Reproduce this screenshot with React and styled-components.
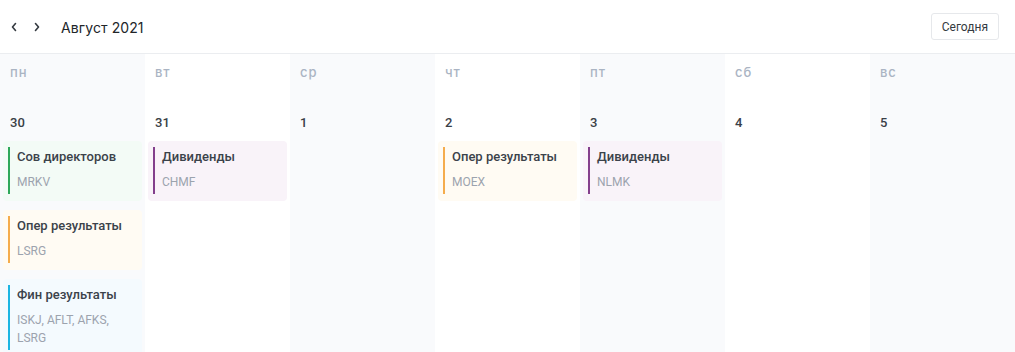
import React from 'react';
import styled, { createGlobalStyle } from 'styled-components';

const GlobalStyle = createGlobalStyle`
  html, body { margin: 0; padding: 0; background: #ffffff; }
  body { font-family: 'Roboto', 'Liberation Sans', sans-serif; color: #343a40; }
`;

const Page = styled.div` display: flex; flex-direction: column; min-height: 100vh; `;
const Header = styled.div` display: flex; align-items: center; justify-content: space-between; height: 53px; padding: 0 16px 0 6px; border-bottom: 1px solid #ebedf0; box-sizing: content-box; `;
const NavGroup = styled.div` display: flex; align-items: center; `;
const NavButton = styled.button` display: flex; align-items: center; justify-content: center; width: 16px; height: 24px; padding: 0; margin-right: 7px; border: none; background: none; color: #343a40; cursor: pointer; `;
const MonthTitle = styled.h2` margin: 2px 0 0 9px; font-family: 'Inter', 'Open Sans', sans-serif; font-size: 14px; font-weight: 400; letter-spacing: 0.1px; color: #212529; `;
const TodayButton = styled.button` height: 27px; padding: 0 10px; border: 1px solid #e6e8eb; border-radius: 3px; background: #fff; font-family: 'Roboto', sans-serif; font-size: 12px; color: #343a40; cursor: pointer; `;

const Grid = styled.div` flex: 1; display: grid; grid-template-columns: repeat(7, 1fr); `;
const Column = styled.div` background: ${p => (p.$tinted ? '#f9fafc' : '#ffffff')}; padding: 0 3px; `;
const DayName = styled.div` height: 39px; padding: 11px 7px 0; line-height: 14px; font-family: 'Inter', sans-serif; font-size: 13px; font-weight: 500; letter-spacing: 0.9px; color: #aab4c3; `;
const DateNum = styled.div` padding: 11px 7px 10px; line-height: 16px; font-size: 13px; font-weight: 500; color: #3a4047; `;

const Card = styled.div` position: relative; margin-bottom: 9px; padding: 8px 8px 10px 14px; border-radius: 4px; background: ${p => p.$bg};
  &::before { content: ''; position: absolute; left: 5px; top: 6px; bottom: 7px; width: 2px; background: ${p => p.$accent}; }
`;
const CardTitle = styled.div` line-height: 16px; font-size: 13px; font-weight: 500; color: #3b424a; `;
const Tickers = styled.div` margin-top: 8px; line-height: 18px; font-size: 12px; color: #9ca3ae; `;

const kinds = {
  board: { bg: '#f3fbf6', accent: '#2fa85a' },
  oper: { bg: '#fffbf3', accent: '#f5ac4c' },
  fin: { bg: '#f4fafe', accent: '#1cb5e2' },
  div: { bg: '#f9f3f9', accent: '#833f8c' },
};

const days = [
  { name: 'пн', date: 30, events: [
    { kind: 'board', title: 'Сов директоров', tickers: 'MRKV' },
    { kind: 'oper', title: 'Опер результаты', tickers: 'LSRG' },
    { kind: 'fin', title: 'Фин результаты', tickers: 'ISKJ, AFLT, AFKS, LSRG' },
  ] },
  { name: 'вт', date: 31, events: [{ kind: 'div', title: 'Дивиденды', tickers: 'CHMF' }] },
  { name: 'ср', date: 1, events: [] },
  { name: 'чт', date: 2, events: [{ kind: 'oper', title: 'Опер результаты', tickers: 'MOEX' }] },
  { name: 'пт', date: 3, events: [{ kind: 'div', title: 'Дивиденды', tickers: 'NLMK' }] },
  { name: 'сб', date: 4, events: [] },
  { name: 'вс', date: 5, events: [] },
];

const Chevron = ({ dir }) => (
  <svg width="8" height="10" viewBox="0 0 8 10" fill="none">
    <path d={dir === 'left' ? 'M5.5 1.5 L2.5 5 L5.5 8.5' : 'M2.5 1.5 L5.5 5 L2.5 8.5'} stroke="currentColor" strokeWidth="1.6" strokeLinecap="round" strokeLinejoin="round" />
  </svg>
);

export default function App() {
  return (
    <Page>
      <GlobalStyle />
      <Header>
        <NavGroup>
          <NavButton aria-label="prev"><Chevron dir="left" /></NavButton>
          <NavButton aria-label="next"><Chevron dir="right" /></NavButton>
          <MonthTitle>Август 2021</MonthTitle>
        </NavGroup>
        <TodayButton>Сегодня</TodayButton>
      </Header>
      <Grid>
        {days.map((d, i) => (
          <Column key={d.name} $tinted={i % 2 === 0}>
            <DayName>{d.name}</DayName>
            <DateNum>{d.date}</DateNum>
            {d.events.map((e, j) => (
              <Card key={j} $bg={kinds[e.kind].bg} $accent={kinds[e.kind].accent}>
                <CardTitle>{e.title}</CardTitle>
                <Tickers>{e.tickers}</Tickers>
              </Card>
            ))}
          </Column>
        ))}
      </Grid>
    </Page>
  );
}
